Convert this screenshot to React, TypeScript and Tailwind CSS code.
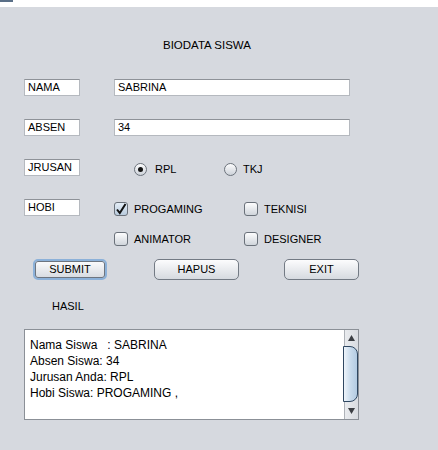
import React from "react";

function LabelBox({ text }: { text: string }) {
  return (
    <div className="w-[56px] h-[17px] bg-white border border-[#b5b9bf] border-t-[#8e9298] pl-[3px] text-[11px] leading-[15px] text-black whitespace-nowrap overflow-hidden">
      {text}
    </div>
  );
}

function Field({ text }: { text: string }) {
  return (
    <div className="w-[236px] h-[17px] bg-white border border-[#b5b9bf] border-t-[#8e9298] pl-[3px] text-[11px] leading-[15px] text-black">
      {text}
    </div>
  );
}

function Radio({ checked, label, w, gap }: { checked?: boolean; label: string; w?: string; gap: string }) {
  return (
    <div className={"flex items-center " + (w ?? "")}>
      <div className="w-[13px] h-[13px] rounded-full border border-[#6c737c] bg-linear-to-b from-[#fdfdfe] to-[#cdd2d9] flex items-center justify-center">
        {checked && <div className="w-[5px] h-[5px] rounded-full bg-[#141414]" />}
      </div>
      <span className={gap + " text-[11px] leading-[13px] text-black"}>{label}</span>
    </div>
  );
}

function Check({ checked, label, w }: { checked?: boolean; label: string; w?: string }) {
  return (
    <div className={"flex items-center " + (w ?? "")}>
      <div
        className={
          "w-[14px] h-[14px] rounded-[3px] border border-[#6a717a] flex items-center justify-center " +
          (checked ? "bg-linear-to-b from-[#e4edf6] to-[#b9cbdd]" : "bg-linear-to-b from-[#fdfdfe] to-[#d0d5db]")
        }
      >
        {checked && (
          <svg width="12" height="12" viewBox="0 0 12 12">
            <path d="M2 6.5 L4.8 10 L10.5 1" fill="none" stroke="#111" strokeWidth="2" strokeLinejoin="miter" />
          </svg>
        )}
      </div>
      <span className="ml-[6px] text-[11px] leading-[13px] text-black">{label}</span>
    </div>
  );
}

function Btn({ label, w, focus }: { label: string; w: string; focus?: boolean }) {
  return (
    <div
      className={
        "h-[21px] rounded-[5px] flex items-center justify-center text-[11px] leading-[13px] text-black bg-linear-to-b from-[#fcfcfd] to-[#d6dae0] " +
        w +
        (focus ? " border-2 border-[#8cb1d9] shadow-[inset_0_0_0_1px_#6d7580]" : " border border-[#737a84]")
      }
    >
      {label}
    </div>
  );
}

export default function App() {
  return (
    <div className="w-[438px] h-[450px] bg-white flex flex-col font-['Liberation_Sans',Arial,sans-serif] overflow-hidden">
      <div className="h-[7px] bg-white">
        <div className="w-[13px] h-[2px] bg-[#5a6f87]" />
      </div>
      <div className="flex-1 bg-[#d6d9df] flex flex-col pt-[32px]">
        <div className="pl-[163px] text-[11.5px] leading-[13px] text-black">BIODATA SISWA</div>

        <div className="flex items-center pl-[24px] mt-[27px]">
          <LabelBox text="NAMA" />
          <div className="ml-[34px]">
            <Field text="SABRINA" />
          </div>
        </div>

        <div className="flex items-center pl-[24px] mt-[23px]">
          <LabelBox text="ABSEN" />
          <div className="ml-[34px]">
            <Field text="34" />
          </div>
        </div>

        <div className="flex items-center pl-[24px] mt-[23px]">
          <LabelBox text="JRUSAN" />
          <div className="ml-[54px] flex items-center pt-[3px]">
            <Radio checked label="RPL" w="w-[90px]" gap="ml-[8px]" />
            <Radio label="TKJ" gap="ml-[6px]" />
          </div>
        </div>

        <div className="flex items-center pl-[24px] mt-[23px]">
          <LabelBox text="HOBI" />
          <div className="ml-[34px] flex items-center pt-[3px]">
            <Check checked label="PROGAMING" w="w-[130px]" />
            <Check label="TEKNISI" />
          </div>
        </div>

        <div className="flex items-center pl-[114px] mt-[16px]">
          <Check label="ANIMATOR" w="w-[130px]" />
          <Check label="DESIGNER" />
        </div>

        <div className="flex items-center pl-[33px] mt-[13px]">
          <Btn label="SUBMIT" w="w-[74px]" focus />
          <div className="ml-[47px]">
            <Btn label="HAPUS" w="w-[85px]" />
          </div>
          <div className="ml-[45px]">
            <Btn label="EXIT" w="w-[75px]" />
          </div>
        </div>

        <div className="pl-[52px] mt-[20px] text-[11px] leading-[13px] text-black">HASIL</div>

        <div className="ml-[24px] mt-[16px] w-[335px] h-[91px] border border-[#8b9097] bg-white flex">
          <div className="flex-1 pt-[7px] pl-[5px] text-[12px] leading-[16px] text-black whitespace-pre">
            <div>{"Nama Siswa   : SABRINA"}</div>
            <div>{"Absen Siswa: 34"}</div>
            <div>{"Jurusan Anda: RPL"}</div>
            <div>{"Hobi Siswa: PROGAMING ,"}</div>
          </div>
          <div className="w-[14px] h-full border-l border-[#aeb2b8] bg-linear-to-r from-[#e9ebee] to-[#d9dce1] flex flex-col">
            <div className="h-[16px] flex items-center justify-center">
              <svg width="7" height="6" viewBox="0 0 7 6">
                <path d="M3.5 0 L7 6 L0 6 Z" fill="#3c3f44" />
              </svg>
            </div>
            <div className="-ml-[2px] h-[56px] rounded-r-[8px] border border-[#2f4761] bg-linear-to-r from-[#eef4fa] via-[#c9dbec] to-[#b3cbe2]" />
            <div className="flex-1 flex items-end justify-center pb-[5px]">
              <svg width="7" height="6" viewBox="0 0 7 6">
                <path d="M0 0 L7 0 L3.5 6 Z" fill="#3c3f44" />
              </svg>
            </div>
          </div>
        </div>
      </div>
    </div>
  );
}
